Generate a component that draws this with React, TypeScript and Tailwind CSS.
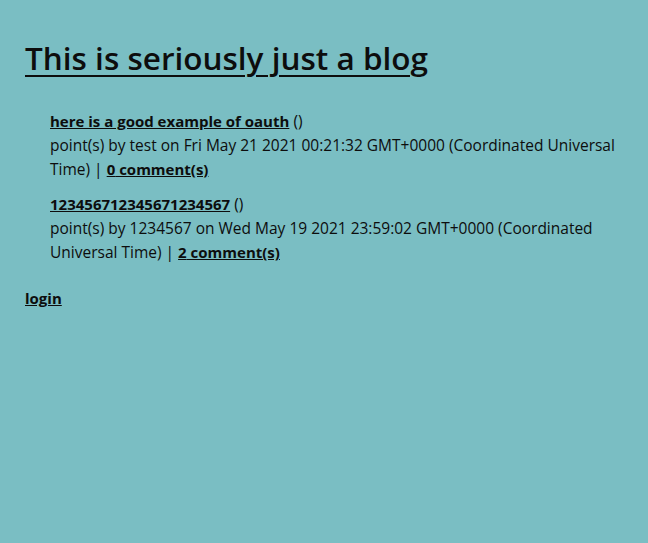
import React from "react";

type Post = {
  title: string;
  by: string;
  date: string;
  comments: number;
};

const posts: Post[] = [
  {
    title: "here is a good example of oauth",
    by: "test",
    date: "Fri May 21 2021 00:21:32 GMT+0000 (Coordinated Universal Time)",
    comments: 0,
  },
  {
    title: "12345671234567" + "1234567",
    by: "1234567",
    date: "Wed May 19 2021 23:59:02 GMT+0000 (Coordinated Universal Time)",
    comments: 2,
  },
];

const App: React.FC = () => {
  return (
    <div className="min-h-[543px] w-full bg-[#7abec3] text-[#0d0d0d] font-['Open_Sans',sans-serif] px-[25px] pt-[38px]">
      {/* Title */}
      <h1 className="text-[31.5px] leading-[40px] font-semibold underline decoration-2 underline-offset-[5px] m-0">
        This is seriously just a blog
      </h1>

      {/* Posts */}
      <ul className="mt-[31px] pl-[25px] flex flex-col gap-[11px]">
        {posts.map((p, i) => (
          <li key={i} className="text-[15.5px] leading-[24px]">
            <div>
              <a href="#" className="text-[15px] font-bold underline">
                {p.title}
              </a>{" "}
              ()
            </div>
            <div>
              point(s) by {p.by} on {p.date} |{" "}
              <a href="#" className="text-[15px] font-bold underline">
                {p.comments} comment(s)
              </a>
            </div>
          </li>
        ))}
      </ul>

      <div className="mt-[22px] text-[15px] leading-[24px]">
        <a href="#" className="font-bold underline">
          login
        </a>
      </div>
    </div>
  );
};

export default App;
